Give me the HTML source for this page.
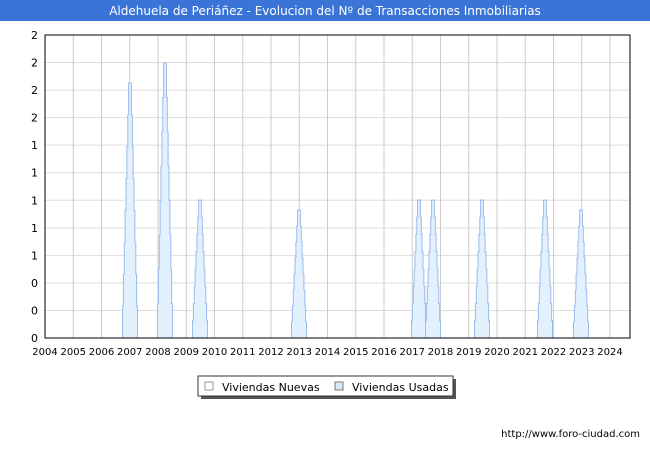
<!DOCTYPE html><html><head><style>
body{margin:0;width:650px;height:450px;background:#fff;font-family:"DejaVu Sans","Liberation Sans",sans-serif;overflow:hidden;position:relative}
#h{position:absolute;left:0;top:0;width:650px;height:21px;background:#3a74d6;color:#fff;font-size:12px;text-align:center;line-height:22px}
</style></head><body>
<div id="h">Aldehuela de Periáñez - Evolucion del Nº de Transacciones Inmobiliarias</div>
<svg id="s" width="650" height="450" style="position:absolute;left:0;top:0" font-family="DejaVu Sans, Liberation Sans, sans-serif" font-size="11"></svg>
<script>
var s=document.getElementById('s'),o='';
var L=45,R=630,T=35,B=338;
for(var i=0;i<12;i++){var y=T+i*(B-T)/11;o+='<line x1="'+L+'" x2="'+R+'" y1="'+y+'" y2="'+y+'" stroke="#dddddd"/>';
var lab=['2','2','2','2','1','1','1','1','1','0','0','0'][i];o+='<text x="38" y="'+(y+4)+'" text-anchor="end">'+lab+'</text>';}
for(var k=0;k<=20;k++){var x=L+k*28.25;o+='<line x1="'+x+'" x2="'+x+'" y1="'+T+'" y2="'+B+'" stroke="#cccccc"/>';
o+='<text x="'+x+'" y="355" text-anchor="middle" font-size="10">'+(2004+k)+'</text>';}
var sp=[[130,83],[165,63],[200,200],[299,210],[419,200],[433,200],[482,200],[545,200],[581,210]];
sp.forEach(function(p){var c=p[0],top=p[1],h=B-top,n=8,pts=[];
for(var j=0;j<n;j++){var w=7*(1-j/n)+0.5;var y1=B-h*j/n,y2=B-h*(j+1)/n;pts.push([c-w,y1],[c-w,y2]);}
var r=[];for(var j=pts.length-1;j>=0;j--)r.push([2*c-pts[j][0],pts[j][1]]);
var all=pts.concat(r).map(function(q){return q[0].toFixed(1)+','+q[1].toFixed(1)}).join(' ');
o+='<polygon points="'+all+'" fill="#e3f0fd" stroke="#99bbee" stroke-width="1"/>';});
o+='<rect x="'+L+'" y="'+T+'" width="'+(R-L)+'" height="'+(B-T)+'" fill="none" stroke="#000"/>';
o+='<rect x="201" y="379" width="255" height="20" fill="#555"/><rect x="198" y="376" width="255" height="20" fill="#fff" stroke="#333"/>';
o+='<rect x="205" y="382" width="8" height="8" fill="#fff" stroke="#999"/><text x="222" y="391">Viviendas Nuevas</text>';
o+='<rect x="335" y="382" width="8" height="8" fill="#d8e8fb" stroke="#777"/><text x="352" y="391">Viviendas Usadas</text>';
o+='<text x="640" y="437" text-anchor="end" font-size="10">http://www.foro-ciudad.com</text>';
s.innerHTML=o;
</script></body></html>
